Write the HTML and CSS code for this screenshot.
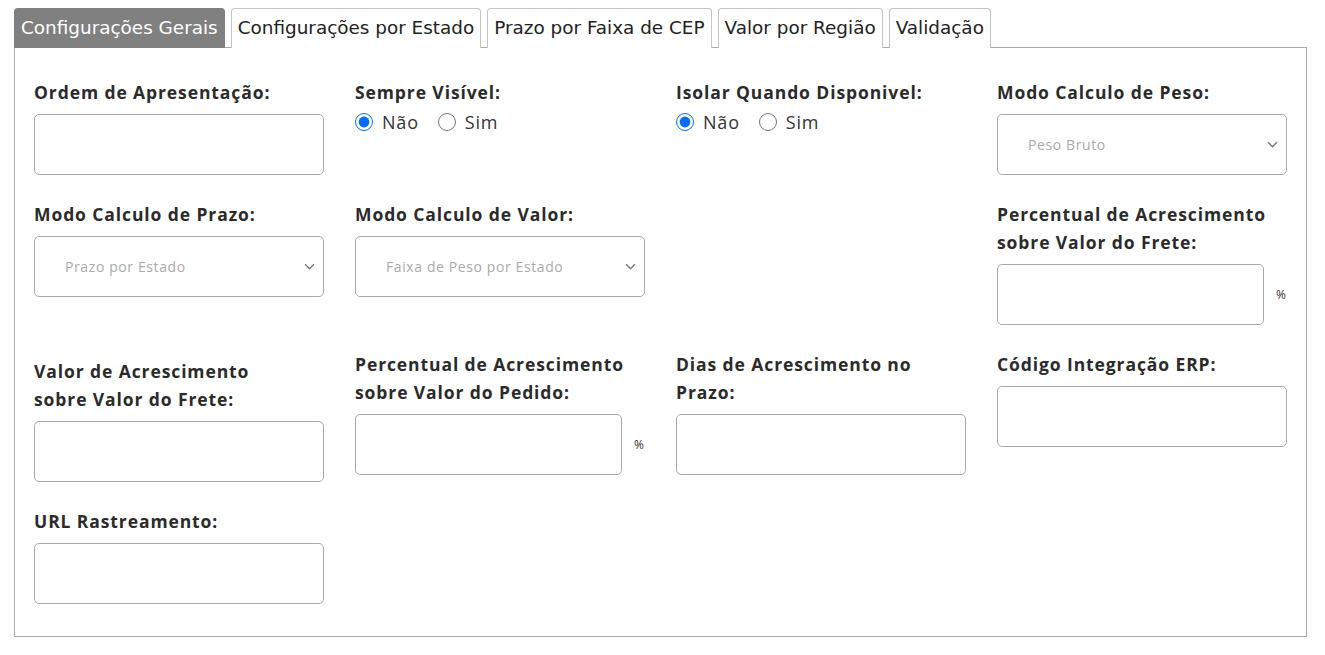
FILE: index.html
```html
<!DOCTYPE html>
<html lang="pt-BR">
<head>
<meta charset="utf-8">
<title>Configurações</title>
<link rel="stylesheet" href="styles.css">
</head>
<body>
<div class="page">
  <ul class="tabs">
    <li class="tab active">Configurações Gerais</li>
    <li class="tab">Configurações por Estado</li>
    <li class="tab">Prazo por Faixa de CEP</li>
    <li class="tab">Valor por Região</li>
    <li class="tab">Validação</li>
  </ul>
  <div class="panel">
    <div class="row">
      <div class="field">
        <label class="lbl">Ordem de Apresentação:</label>
        <input class="inp" type="text">
      </div>
      <div class="field">
        <label class="lbl">Sempre Visível:</label>
        <div class="radios">
          <label class="radio"><input type="radio" name="sv" checked> Não</label>
          <label class="radio"><input type="radio" name="sv"> Sim</label>
        </div>
      </div>
      <div class="field">
        <label class="lbl">Isolar Quando Disponivel:</label>
        <div class="radios">
          <label class="radio"><input type="radio" name="iq" checked> Não</label>
          <label class="radio"><input type="radio" name="iq"> Sim</label>
        </div>
      </div>
      <div class="field">
        <label class="lbl">Modo Calculo de Peso:</label>
        <div class="sel"><span>Peso Bruto</span><svg class="chev" viewBox="0 0 12 8" width="11" height="7"><path d="M1 1.5 6 6.5 11 1.5" fill="none" stroke="#777" stroke-width="1.6"/></svg></div>
      </div>
    </div>
    <div class="row">
      <div class="field">
        <label class="lbl">Modo Calculo de Prazo:</label>
        <div class="sel"><span>Prazo por Estado</span><svg class="chev" viewBox="0 0 12 8" width="11" height="7"><path d="M1 1.5 6 6.5 11 1.5" fill="none" stroke="#777" stroke-width="1.6"/></svg></div>
      </div>
      <div class="field">
        <label class="lbl">Modo Calculo de Valor:</label>
        <div class="sel"><span>Faixa de Peso por Estado</span><svg class="chev" viewBox="0 0 12 8" width="11" height="7"><path d="M1 1.5 6 6.5 11 1.5" fill="none" stroke="#777" stroke-width="1.6"/></svg></div>
      </div>
      <div class="field"></div>
      <div class="field">
        <label class="lbl">Percentual de Acrescimento sobre Valor do Frete:</label>
        <div class="pct"><input class="inp" type="text"><span class="pct-sign">%</span></div>
      </div>
    </div>
    <div class="row">
      <div class="field shift">
        <label class="lbl narrow">Valor de Acrescimento sobre Valor do Frete:</label>
        <input class="inp" type="text">
      </div>
      <div class="field">
        <label class="lbl">Percentual de Acrescimento sobre Valor do Pedido:</label>
        <div class="pct"><input class="inp" type="text"><span class="pct-sign">%</span></div>
      </div>
      <div class="field">
        <label class="lbl">Dias de Acrescimento no Prazo:</label>
        <input class="inp" type="text">
      </div>
      <div class="field">
        <label class="lbl">Código Integração ERP:</label>
        <input class="inp" type="text">
      </div>
    </div>
    <div class="row">
      <div class="field">
        <label class="lbl">URL Rastreamento:</label>
        <input class="inp" type="text">
      </div>
    </div>
  </div>
</div>
</body>
</html>
```
FILE: styles.css
```css
* { box-sizing: border-box; }
html, body { margin: 0; padding: 0; background: #fff; }
.page { padding: 7px 18px 0 14px; }
.tabs {
  list-style: none; margin: 0; padding: 0;
  display: flex; gap: 6px; height: 40px; align-items: flex-end;
}
.tab {
  font-family: "DejaVu Sans", Verdana, sans-serif;
  font-size: 18.4px; color: #222;
  height: 40px; line-height: 38px;
  padding: 0 6px;
  border: 1px solid #c5c5c5; border-bottom: none;
  border-radius: 4px 4px 0 0;
  background: #fff;
  margin-bottom: -1px;
  position: relative; z-index: 1;
  white-space: nowrap;
}
.tab.active { background: #808080; color: #fff; border-color: #808080; }
.panel {
  border: 1px solid #aaa;
  padding: 30px 19px 32px 19px;
  display: flex; flex-direction: column; gap: 25px;
  height: 590px;
}
.row { display: grid; grid-template-columns: repeat(4, 290px); column-gap: 31px; align-items: start; }
.field { display: flex; flex-direction: column; }
.field.shift { padding-top: 7px; }
.lbl {
  font-family: "Open Sans", sans-serif; font-weight: 700;
  font-size: 17.5px; line-height: 28px; color: #2b2b2b;
  letter-spacing: 0.9px;
  margin-bottom: 8px;
}
.lbl.narrow { max-width: 240px; }
.inp {
  height: 61px; width: 290px;
  border: 1px solid #aaa; border-radius: 5px;
  background: #fff; margin: 0;
}
.pct { display: flex; align-items: center; }
.pct .inp { width: 267px; }
.pct-sign { font-family: "Open Sans", sans-serif; font-size: 12px; color: #333; margin-left: 12px; }
.radios { display: flex; gap: 19px; margin-top: -4px; }
.radio {
  display: flex; align-items: center; gap: 9px;
  font-family: "Open Sans", sans-serif; font-size: 18px; color: #333;
  letter-spacing: 0.8px;
}
.radio input { width: 18px; height: 18px; margin: 0; accent-color: #0a6cf5; }
.sel {
  height: 61px; width: 290px;
  border: 1px solid #aaa; border-radius: 5px;
  display: flex; align-items: center; justify-content: space-between;
  padding: 0 8px 0 30px;
  font-family: "Open Sans", sans-serif; font-size: 14px; color: #aaa;
  letter-spacing: 0.6px;
}
```
